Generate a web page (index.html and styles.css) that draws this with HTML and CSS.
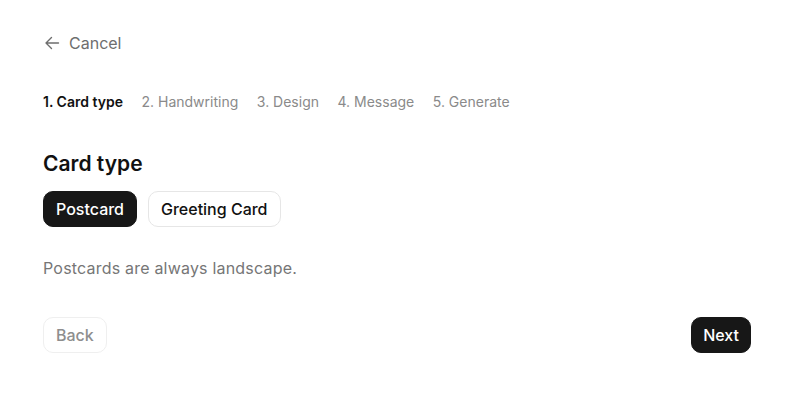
FILE: index.html
```html
<!DOCTYPE html>
<html lang="en">
    <head>
        <meta charset="UTF-8" />
        <meta name="viewport" content="width=device-width, initial-scale=1.0" />
        <title>New card</title>
        <link rel="stylesheet" href="styles.css">
    </head>
    <body>
        <div class="wizard">
            <a class="cancel" href="javascript:;">
                <svg width="16" height="16" viewBox="0 0 16 16" fill="none" stroke="currentColor" stroke-width="1.4" stroke-linecap="round" stroke-linejoin="round">
                    <path d="M14.5 8H2M7.5 2.5L2 8l5.5 5.5" />
                </svg>
                Cancel
            </a>

            <!-- 步骤 -->
            <ol class="steps">
                <li class="current">1. Card type</li>
                <li>2. Handwriting</li>
                <li>3. Design</li>
                <li>4. Message</li>
                <li>5. Generate</li>
            </ol>

            <h2 class="title">Card type</h2>
            <div class="options">
                <button class="btn dark">Postcard</button>
                <button class="btn">Greeting Card</button>
            </div>
            <p class="hint">Postcards are always landscape.</p>

            <div class="footer">
                <button class="btn disabled">Back</button>
                <button class="btn dark">Next</button>
            </div>
        </div>
    </body>
</html>
```

FILE: styles.css
```css
* {
    margin: 0;
    padding: 0;
    box-sizing: border-box;
}

body {
    font-family: Inter, "Liberation Sans", sans-serif;
    color: #111;
    background: #fff;
}

ol {
    list-style: none;
}

.wizard {
    padding: 31px 55px 0 43px;
}

.cancel {
    display: inline-flex;
    align-items: center;
    gap: 9px;
    height: 24px;
    font-size: 16px;
    color: #6e6e6e;
    text-decoration: none;
}

.cancel svg {
    margin-left: 1px;
}

.steps {
    display: flex;
    gap: 18.5px;
    margin-top: 37px;
    font-size: 14px;
    line-height: 20px;
    color: #8a8a8a;
}

.steps .current {
    color: #111;
    font-weight: 600;
}

.title {
    margin-top: 38px;
    font-size: 21px;
    line-height: 28px;
    font-weight: 600;
}

.options {
    display: flex;
    gap: 11px;
    margin-top: 13px;
}

.btn {
    height: 36px;
    padding: 0 12px;
    border: 1px solid #e6e6e6;
    border-radius: 10px;
    background: #fff;
    font-family: inherit;
    font-size: 16px;
    font-weight: 500;
    color: #111;
    cursor: pointer;
}

.btn.dark {
    background: #171717;
    border-color: #171717;
    color: #fff;
}

.footer .btn.dark {
    padding: 0 11px;
}

.btn.disabled {
    color: #8e8e8e;
    border-color: #efefef;
    cursor: default;
}

.hint {
    margin-top: 29px;
    font-size: 16px;
    line-height: 24px;
    letter-spacing: 0.2px;
    color: #767676;
}

.footer {
    display: flex;
    justify-content: space-between;
    margin-top: 37px;
}
```
